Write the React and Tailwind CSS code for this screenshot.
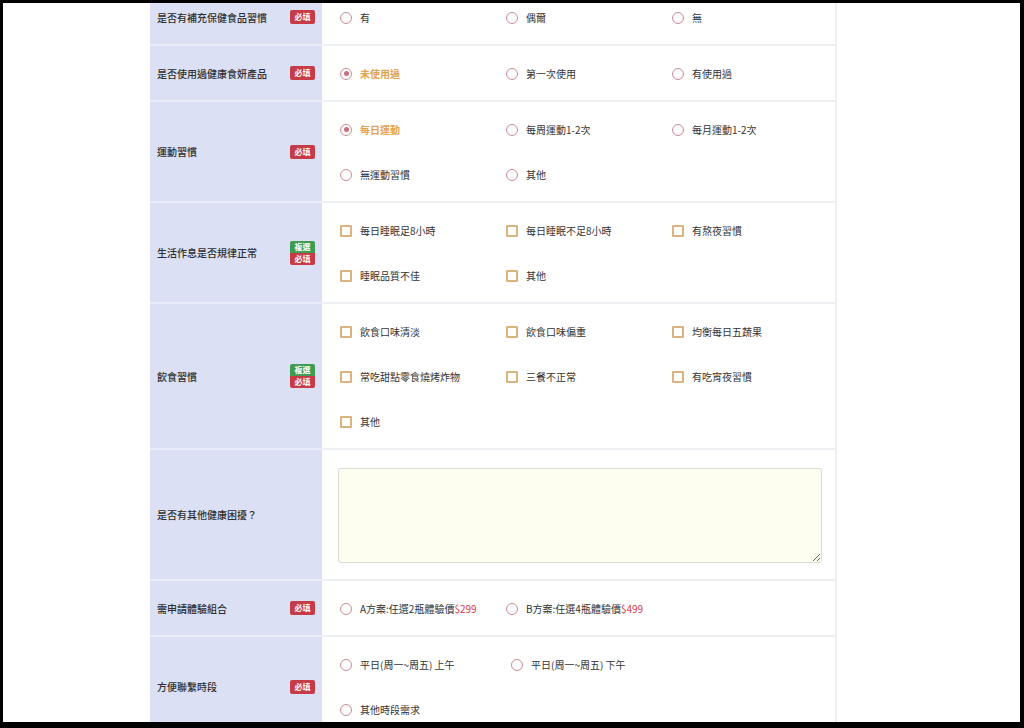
import React from 'react';

const FONT = { fontFamily: '"Noto Sans CJK TC", "Noto Sans", sans-serif' };

const Badge = ({ multi }) => (
  <div className="flex flex-col items-center">
    {multi && (
      <span className="flex h-[12px] w-[25px] items-center justify-center rounded-t-[2px] bg-[#3e9b52] text-[8px] font-bold leading-none text-white">
        複選
      </span>
    )}
    <span
      className={`flex w-[25px] items-center justify-center bg-[#c63b46] text-[8px] font-bold leading-none text-white ${
        multi ? 'h-[12px] rounded-b-[2px]' : 'h-[14px] rounded-[2px]'
      }`}
    >
      必填
    </span>
  </div>
);

const Radio = ({ checked }) => (
  <span className="flex h-[12px] w-[12px] shrink-0 items-center justify-center rounded-full border-[1.5px] border-[#c98d96]">
    {checked && <span className="h-[5px] w-[5px] rounded-full bg-[#c7707d]" />}
  </span>
);

const Box = () => <span className="h-[12px] w-[12px] shrink-0 rounded-[1px] border-2 border-[#d9b47e]" />;

const Option = ({ type, label, price, checked, width = 'w-[166px]' }) => (
  <div className={`flex h-[45px] shrink-0 items-center gap-[8px] ${width}`}>
    {type === 'radio' ? <Radio checked={checked} /> : <Box />}
    <span className={`whitespace-nowrap text-[10px] ${checked ? 'font-bold text-[#e2a34f]' : 'text-[#333]'}`}>
      {label}
      {price && <span className="text-[#d8404b]">{price}</span>}
    </span>
  </div>
);

const Row = ({ label, multi, required = true, children, padded = true }) => (
  <div className="flex">
    <div className="flex w-[172px] shrink-0 items-center justify-between border-b-2 border-[#e9ecf9] bg-[#dbe0f5] pl-[7px] pr-[7px]">
      <span className="text-[10px] font-medium text-[#2e2e2e]">{label}</span>
      {required && <Badge multi={multi} />}
    </div>
    <div
      className={`min-w-0 flex-1 overflow-hidden border-b-2 border-r-2 border-[#eeeff2] bg-white ${
        padded ? 'pb-[4px] pl-[18px] pt-[5px]' : ''
      }`}
    >
      {children}
    </div>
  </div>
);

const Line = ({ children }) => <div className="flex">{children}</div>;

export default function App() {
  return (
    <div className="h-[728px] w-[1024px] bg-black pb-[6px] pl-[3px] pr-[4px] pt-[3px]" style={FONT}>
      <div className="h-full w-full overflow-hidden bg-white">
        <div className="ml-[147px] mt-[-13px] w-[687px]">
          <Row label="是否有補充保健食品習慣">
            <Line>
              <Option type="radio" label="有" />
              <Option type="radio" label="偶爾" />
              <Option type="radio" label="無" width="w-auto" />
            </Line>
          </Row>
          <Row label="是否使用過健康食妍產品">
            <Line>
              <Option type="radio" label="未使用過" checked />
              <Option type="radio" label="第一次使用" />
              <Option type="radio" label="有使用過" width="w-auto" />
            </Line>
          </Row>
          <Row label="運動習慣">
            <Line>
              <Option type="radio" label="每日運動" checked />
              <Option type="radio" label="每周運動1-2次" />
              <Option type="radio" label="每月運動1-2次" width="w-auto" />
            </Line>
            <Line>
              <Option type="radio" label="無運動習慣" />
              <Option type="radio" label="其他" />
            </Line>
          </Row>
          <Row label="生活作息是否規律正常" multi>
            <Line>
              <Option type="box" label="每日睡眠足8小時" />
              <Option type="box" label="每日睡眠不足8小時" />
              <Option type="box" label="有熬夜習慣" width="w-auto" />
            </Line>
            <Line>
              <Option type="box" label="睡眠品質不佳" />
              <Option type="box" label="其他" />
            </Line>
          </Row>
          <Row label="飲食習慣" multi>
            <Line>
              <Option type="box" label="飲食口味清淡" />
              <Option type="box" label="飲食口味偏重" />
              <Option type="box" label="均衡每日五蔬果" width="w-auto" />
            </Line>
            <Line>
              <Option type="box" label="常吃甜點零食燒烤炸物" />
              <Option type="box" label="三餐不正常" />
              <Option type="box" label="有吃宵夜習慣" width="w-auto" />
            </Line>
            <Line>
              <Option type="box" label="其他" />
            </Line>
          </Row>
          <Row label="是否有其他健康困擾？" required={false} padded={false}>
            <div className="pb-[16px] pl-[16px] pr-[13px] pt-[18px]">
              <textarea className="block h-[95px] w-full resize-y rounded-[3px] border border-[#dcdcd6] bg-[#fdfdf0] outline-none" />
            </div>
          </Row>
          <Row label="需申請體驗組合">
            <Line>
              <Option type="radio" label="A方案:任選2瓶體驗價" price="$299" />
              <Option type="radio" label="B方案:任選4瓶體驗價" price="$499" width="w-auto" />
            </Line>
          </Row>
          <Row label="方便聯繫時段">
            <Line>
              <Option type="radio" label="平日(周一~周五) 上午" width="w-[171px]" />
              <Option type="radio" label="平日(周一~周五) 下午" width="w-auto" />
            </Line>
            <Line>
              <Option type="radio" label="其他時段需求" />
            </Line>
          </Row>
        </div>
      </div>
    </div>
  );
}
